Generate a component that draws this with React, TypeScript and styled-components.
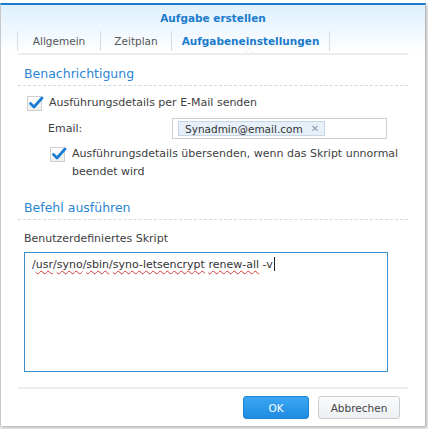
import React from 'react';
import styled, { createGlobalStyle } from 'styled-components';

const GlobalStyle = createGlobalStyle`
  html, body {
    margin: 0;
    padding: 0;
    background: #f4f4f4;
  }
  body {
    font-family: "DejaVu Sans", Verdana, sans-serif;
    font-size: 11px;
    color: #404040;
  }
`;

const Page = styled.div`
  width: 428px;
  height: 429px;
  overflow: hidden;
  background: linear-gradient(#fff, #fff) top / 100% 3px no-repeat, #f6f6f6;
`;

const Dialog = styled.div`
  margin-top: 3px;
  width: 424px;
  height: 421px;
  border-top: 2px solid #1a7ccc;
  border-left: 1px solid #c8c8c8;
  border-right: 1px solid #b8b8b8;
  background: #fff;
  box-shadow: 1px 2px 3px rgba(0, 0, 0, 0.25);
  display: flex;
  flex-direction: column;
`;

const Header = styled.div`
  background: linear-gradient(#def0fd, #f9fcff 85%, #fff);
  padding: 6px 16px 0;
  height: 46px;
  box-sizing: border-box;
`;

const Title = styled.div`
  text-align: center;
  font-weight: bold;
  font-size: 10.5px;
  line-height: 14px;
  color: #1a7bcc;
`;

const Tabs = styled.div`
  display: flex;
  margin-top: 6px;
  height: 20px;
`;

const Tab = styled.div<{ $active?: boolean; $w: number }>`
  width: ${(p) => p.$w}px;
  border-left: 1px solid #dcdcdc;
  box-sizing: border-box;
  display: flex;
  align-items: center;
  justify-content: center;
  font-size: 10.5px;
  font-weight: ${(p) => (p.$active ? 'bold' : 'normal')};
  color: ${(p) => (p.$active ? '#1a7bcc' : '#555')};
  &:last-child {
    border-right: 1px solid #dcdcdc;
  }
`;

const TabLine = styled.div`
  position: relative;
  margin: 2px 17px 0;
  height: 2px;
  background: #ececec;
`;

const Notch = styled.div`
  position: absolute;
  left: 226px;
  top: -5px;
  width: 0;
  height: 0;
  border-left: 5px solid transparent;
  border-right: 5px solid transparent;
  border-bottom: 5px solid #ececec;
  &::after {
    content: '';
    position: absolute;
    left: -4px;
    top: 1px;
    border-left: 4px solid transparent;
    border-right: 4px solid transparent;
    border-bottom: 4px solid #fff;
  }
`;

const Body = styled.div`
  padding: 0 17px;
  flex: 1;
`;

const SectionTitle = styled.div<{ $top: number }>`
  margin-top: ${(p) => p.$top}px;
  padding: 0 6px;
  font-size: 12.5px;
  line-height: 16px;
  color: #2a86d4;
  height: 19px;
  border-bottom: 1px dashed #d8d8d8;
`;

const CheckRow = styled.div<{ $indent?: number; $top: number }>`
  display: flex;
  align-items: flex-start;
  margin-top: ${(p) => p.$top}px;
  padding-left: ${(p) => p.$indent || 9}px;
  gap: 7px;
`;

const Box = styled.div`
  position: relative;
  flex: none;
  width: 13px;
  height: 13px;
  margin-top: 2px;
  border: 1px solid #cfcfcf;
  background: linear-gradient(#fff, #f0f0f0);
  svg {
    position: absolute;
    left: 0px;
    top: -2px;
  }
`;

const CheckText = styled.div`
  line-height: 18px;
  color: #404040;
`;

const FieldRow = styled.div`
  display: flex;
  align-items: center;
  margin-top: 6px;
  padding-left: 30px;
`;

const FieldLabel = styled.div`
  width: 124px;
  color: #404040;
`;

const TagInput = styled.div`
  width: 215px;
  height: 21px;
  box-sizing: border-box;
  border: 1px solid #cfcfcf;
  padding: 3px 5px;
  display: flex;
  align-items: center;
`;

const Chip = styled.div`
  height: 15px;
  box-sizing: border-box;
  border: 1px solid #c6d6e4;
  background: #e7f0f9;
  padding: 0 5px 0 6px;
  display: flex;
  align-items: center;
  gap: 8px;
  color: #333;
  font-size: 10.5px;
`;

const ChipClose = styled.span`
  color: #8a9aa8;
  font-size: 10px;
`;

const FieldCaption = styled.div`
  margin-top: 11px;
  padding-left: 6px;
  line-height: 16px;
  color: #404040;
`;

const ScriptBox = styled.div`
  margin: 5px 0 0 6px;
  width: 364px;
  height: 120px;
  box-sizing: border-box;
  border: 1px solid #3d8fcc;
  padding: 4px 7px;
  font-size: 11px;
  line-height: 16px;
  color: #333;
`;

const Misspelled = styled.span`
  text-decoration: underline wavy #d93a3a;
  text-decoration-thickness: 1px;
  text-underline-offset: 2px;
`;

const Caret = styled.span`
  display: inline-block;
  width: 1px;
  height: 14px;
  margin-left: 1px;
  vertical-align: -3px;
  background: #222;
`;

const Footer = styled.div`
  margin: 0 17px;
  border-top: 2px solid #ececec;
  height: 37px;
  display: flex;
  justify-content: flex-end;
  align-items: center;
  gap: 9px;
  padding-right: 8px;
`;

const Button = styled.button<{ $primary?: boolean }>`
  height: 23px;
  width: ${(p) => (p.$primary ? 66 : 82)}px;
  border-radius: 3px;
  font-family: "DejaVu Sans", Verdana, sans-serif;
  font-size: 10.5px;
  padding: 0;
  border: 1px solid ${(p) => (p.$primary ? '#2185d8' : '#c8cdd2')};
  background: ${(p) =>
    p.$primary ? 'linear-gradient(#3aa6f2, #1f8ce2)' : 'linear-gradient(#fbfcfd, #eceff2)'};
  color: ${(p) => (p.$primary ? '#fff' : '#444')};
`;

const Check = () => (
  <svg width="16" height="15" viewBox="0 0 16 15">
    <path d="M2.5 8.5 L6 12 L14 3" fill="none" stroke="#1a7fd4" strokeWidth="2.8" strokeLinecap="round" strokeLinejoin="round" />
  </svg>
);

export default function App() {
  return (
    <Page>
      <GlobalStyle />
      <Dialog>
        <Header>
          <Title>Aufgabe erstellen</Title>
          <Tabs>
            <Tab $w={83}>Allgemein</Tab>
            <Tab $w={71}>Zeitplan</Tab>
            <Tab $w={159} $active>
              Aufgabeneinstellungen
            </Tab>
          </Tabs>
        </Header>
        <TabLine>
          <Notch />
        </TabLine>
        <Body>
          <SectionTitle $top={11}>Benachrichtigung</SectionTitle>
          <CheckRow $top={8}>
            <Box>
              <Check />
            </Box>
            <CheckText>Ausführungsdetails per E-Mail senden</CheckText>
          </CheckRow>
          <FieldRow>
            <FieldLabel>Email:</FieldLabel>
            <TagInput>
              <Chip>
                Synadmin@email.com <ChipClose>✕</ChipClose>
              </Chip>
            </TagInput>
          </FieldRow>
          <CheckRow $indent={32} $top={6}>
            <Box>
              <Check />
            </Box>
            <CheckText>
              Ausführungsdetails übersenden, wenn das Skript unnormal
              <br />
              beendet wird
            </CheckText>
          </CheckRow>
          <SectionTitle $top={19}>Befehl ausführen</SectionTitle>
          <FieldCaption>Benutzerdefiniertes Skript</FieldCaption>
          <ScriptBox>
            /<Misspelled>usr</Misspelled>/<Misspelled>syno</Misspelled>/<Misspelled>sbin</Misspelled>/
            <Misspelled>syno-letsencrypt</Misspelled> <Misspelled>renew-all</Misspelled> -v
            <Caret />
          </ScriptBox>
        </Body>
        <Footer>
          <Button $primary>OK</Button>
          <Button>Abbrechen</Button>
        </Footer>
      </Dialog>
    </Page>
  );
}
